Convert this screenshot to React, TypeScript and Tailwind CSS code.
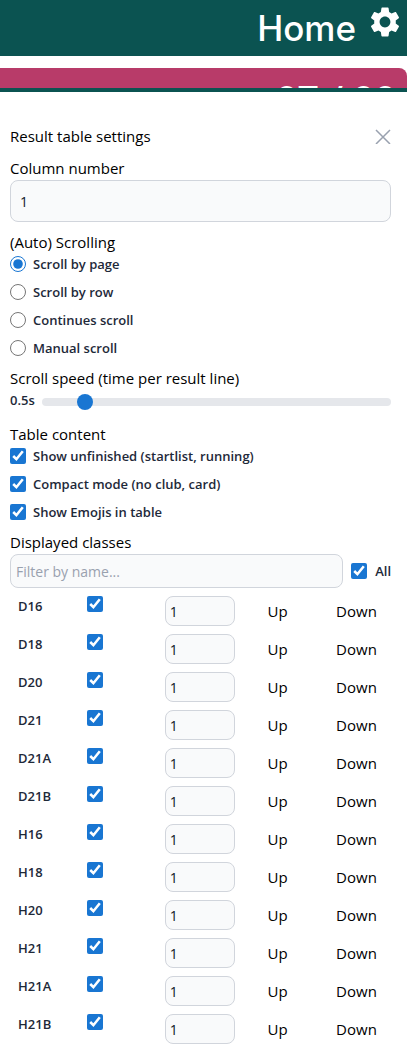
import { useState } from "react";

const scrollModes = [
  { id: "page", label: "Scroll by page" },
  { id: "row", label: "Scroll by row" },
  { id: "continues", label: "Continues scroll" },
  { id: "manual", label: "Manual scroll" },
];

const contentOptions = [
  { id: "unfinished", label: "Show unfinished (startlist, running)" },
  { id: "compact", label: "Compact mode (no club, card)" },
  { id: "emojis", label: "Show Emojis in table" },
];

const classNames = ["D16", "D18", "D20", "D21", "D21A", "D21B", "H16", "H18", "H20", "H21", "H21A", "H21B"];

const boxStyle = "block w-4 h-4 shrink-0 accent-[#1976d2]";
const labelStyle = "text-[13px] leading-5 font-semibold text-gray-800";
const inputStyle = "block border border-gray-300 bg-gray-50 text-gray-900 text-sm";

function Header() {
  return (
    <header className="flex h-14 items-center justify-end gap-[14px] bg-[#0b5351] pr-[7px] text-white">
      <a href="#home" className="font-[Inter,sans-serif] text-[35px] leading-[54px] font-medium">
        Home
      </a>
      <button aria-label="Settings" className="pb-3">
        <svg viewBox="2 2 20 20" className="block h-[30px] w-[30px]" fill="currentColor">
          <path d="M19.14 12.94c.04-.3.06-.61.06-.94 0-.32-.02-.64-.07-.94l2.03-1.58c.18-.14.23-.41.12-.61l-1.92-3.32c-.12-.22-.37-.29-.59-.22l-2.39.96c-.5-.38-1.03-.7-1.62-.94l-.36-2.54c-.04-.24-.24-.41-.48-.41h-3.84c-.24 0-.43.17-.47.41l-.36 2.54c-.59.24-1.13.57-1.62.94l-2.39-.96c-.22-.08-.47 0-.59.22L2.74 8.87c-.12.21-.08.47.12.61l2.03 1.58c-.05.3-.09.63-.09.94s.02.64.07.94l-2.03 1.58c-.18.14-.23.41-.12.61l1.92 3.32c.12.22.37.29.59.22l2.39-.96c.5.38 1.03.7 1.62.94l.36 2.54c.05.24.24.41.48.41h3.84c.24 0 .44-.17.47-.41l.36-2.54c.59-.24 1.13-.56 1.62-.94l2.39.96c.22.08.47 0 .59-.22l1.92-3.32c.12-.22.07-.47-.12-.61l-2.01-1.58zM12 15.6c-1.98 0-3.6-1.62-3.6-3.6s1.62-3.6 3.6-3.6 3.6 1.62 3.6 3.6-1.62 3.6-3.6 3.6z" />
        </svg>
      </button>
    </header>
  );
}

function ClassRow({ name }: { name: string }) {
  return (
    <tr className="align-top">
      <td className="px-2 py-1">
        <label htmlFor={"show-" + name} className={"block " + labelStyle}>
          {name}
        </label>
      </td>
      <td className="px-2 py-1">
        <input id={"show-" + name} type="checkbox" defaultChecked className={boxStyle} />
      </td>
      <td className="px-2 py-1">
        <input
          type="text"
          defaultValue="1"
          aria-label={"Column for " + name}
          className={"h-[30px] w-[70px] rounded-lg px-1 " + inputStyle}
        />
      </td>
      <td className="px-2 py-1">
        <button className="block leading-[30px]">Up</button>
      </td>
      <td className="px-2 py-1">
        <button className="block leading-[30px]">Down</button>
      </td>
    </tr>
  );
}

export default function App() {
  const [mode, setMode] = useState("page");
  const [speed, setSpeed] = useState(500);
  const [filter, setFilter] = useState("");

  return (
    <div className="bg-white font-['Open_Sans',sans-serif] text-[15px] leading-6 text-black">
      <Header />

      {/* Result counter, cut off by the settings drawer */}
      <div className="mt-3 h-5 overflow-hidden rounded-tr-lg bg-[#b83b69] pt-3 pr-[11px] text-right font-[Roboto,sans-serif] text-[38px] leading-[42px] font-medium text-white">
        07 / 00
      </div>

      <main className="border-t-4 border-[#0b5351] pr-4 pl-[10px]">
        <div className="flex items-center justify-between pt-8">
          <h2>Result table settings</h2>
          <button aria-label="Close">
            <svg viewBox="0 0 16 16" className="block h-4 w-4 text-gray-400" fill="none" stroke="currentColor" strokeWidth="1.5">
              <path d="M1 2l14 14M15 2L1 16" />
            </svg>
          </button>
        </div>

        <div className="mt-2">
          <label htmlFor="columns" className="block">Column number</label>
          <input id="columns" type="text" defaultValue="1" className={"h-[42px] w-full rounded-lg px-[9px] " + inputStyle} />
        </div>

        {/* Scrolling mode */}
        <fieldset className="mt-2">
          <legend>(Auto) Scrolling</legend>
          <div className="flex flex-col gap-2">
            {scrollModes.map((m) => (
              <div key={m.id} className="flex items-center gap-[7px]">
                <input
                  id={m.id}
                  type="radio"
                  name="scroll"
                  checked={mode === m.id}
                  onChange={() => setMode(m.id)}
                  className={boxStyle}
                />
                <label htmlFor={m.id} className={labelStyle}>{m.label}</label>
              </div>
            ))}
          </div>
        </fieldset>

        <div className="mt-2">
          <label htmlFor="speed" className="block">Scroll speed (time per result line)</label>
          <div className="flex h-6 items-center gap-[7px]">
            <span className={"pb-1 " + labelStyle}>{speed / 1000}s</span>
            <input
              id="speed"
              type="range"
              min={100}
              max={3900}
              step={100}
              value={speed}
              onChange={(e) => setSpeed(Number(e.target.value))}
              className="h-2 min-w-0 flex-1 appearance-none rounded-lg bg-gray-200 [&::-webkit-slider-thumb]:h-4 [&::-webkit-slider-thumb]:w-4 [&::-webkit-slider-thumb]:appearance-none [&::-webkit-slider-thumb]:rounded-full [&::-webkit-slider-thumb]:bg-[#1976d2]"
            />
          </div>
        </div>

        {/* Table content */}
        <fieldset className="mt-2">
          <legend>Table content</legend>
          <div className="flex flex-col gap-2">
            {contentOptions.map((o) => (
              <div key={o.id} className="flex items-center gap-[7px]">
                <input id={o.id} type="checkbox" defaultChecked className={boxStyle} />
                <label htmlFor={o.id} className={labelStyle}>{o.label}</label>
              </div>
            ))}
          </div>
        </fieldset>

        {/* Displayed classes */}
        <div className="mt-2">
          <label htmlFor="filter" className="block">Displayed classes</label>
          <div className="flex items-center gap-2">
            <input
              id="filter"
              type="text"
              placeholder="Filter by name..."
              value={filter}
              onChange={(e) => setFilter(e.target.value)}
              className={"h-[34px] min-w-0 flex-1 rounded-lg px-[5px] placeholder:text-gray-400 " + inputStyle}
            />
            <input id="all" type="checkbox" defaultChecked className={boxStyle} />
            <label htmlFor="all" className={labelStyle}>All</label>
          </div>
        </div>

        <table className="mt-1 w-full table-fixed">
          <colgroup>
            <col className="w-[18%]" />
            <col className="w-[20.5%]" />
            <col className="w-[27%]" />
            <col className="w-[18%]" />
            <col />
          </colgroup>
          <tbody>
            {classNames
              .filter((name) => name.toLowerCase().includes(filter.toLowerCase()))
              .map((name) => (
                <ClassRow key={name} name={name} />
              ))}
          </tbody>
        </table>
      </main>
    </div>
  );
}
